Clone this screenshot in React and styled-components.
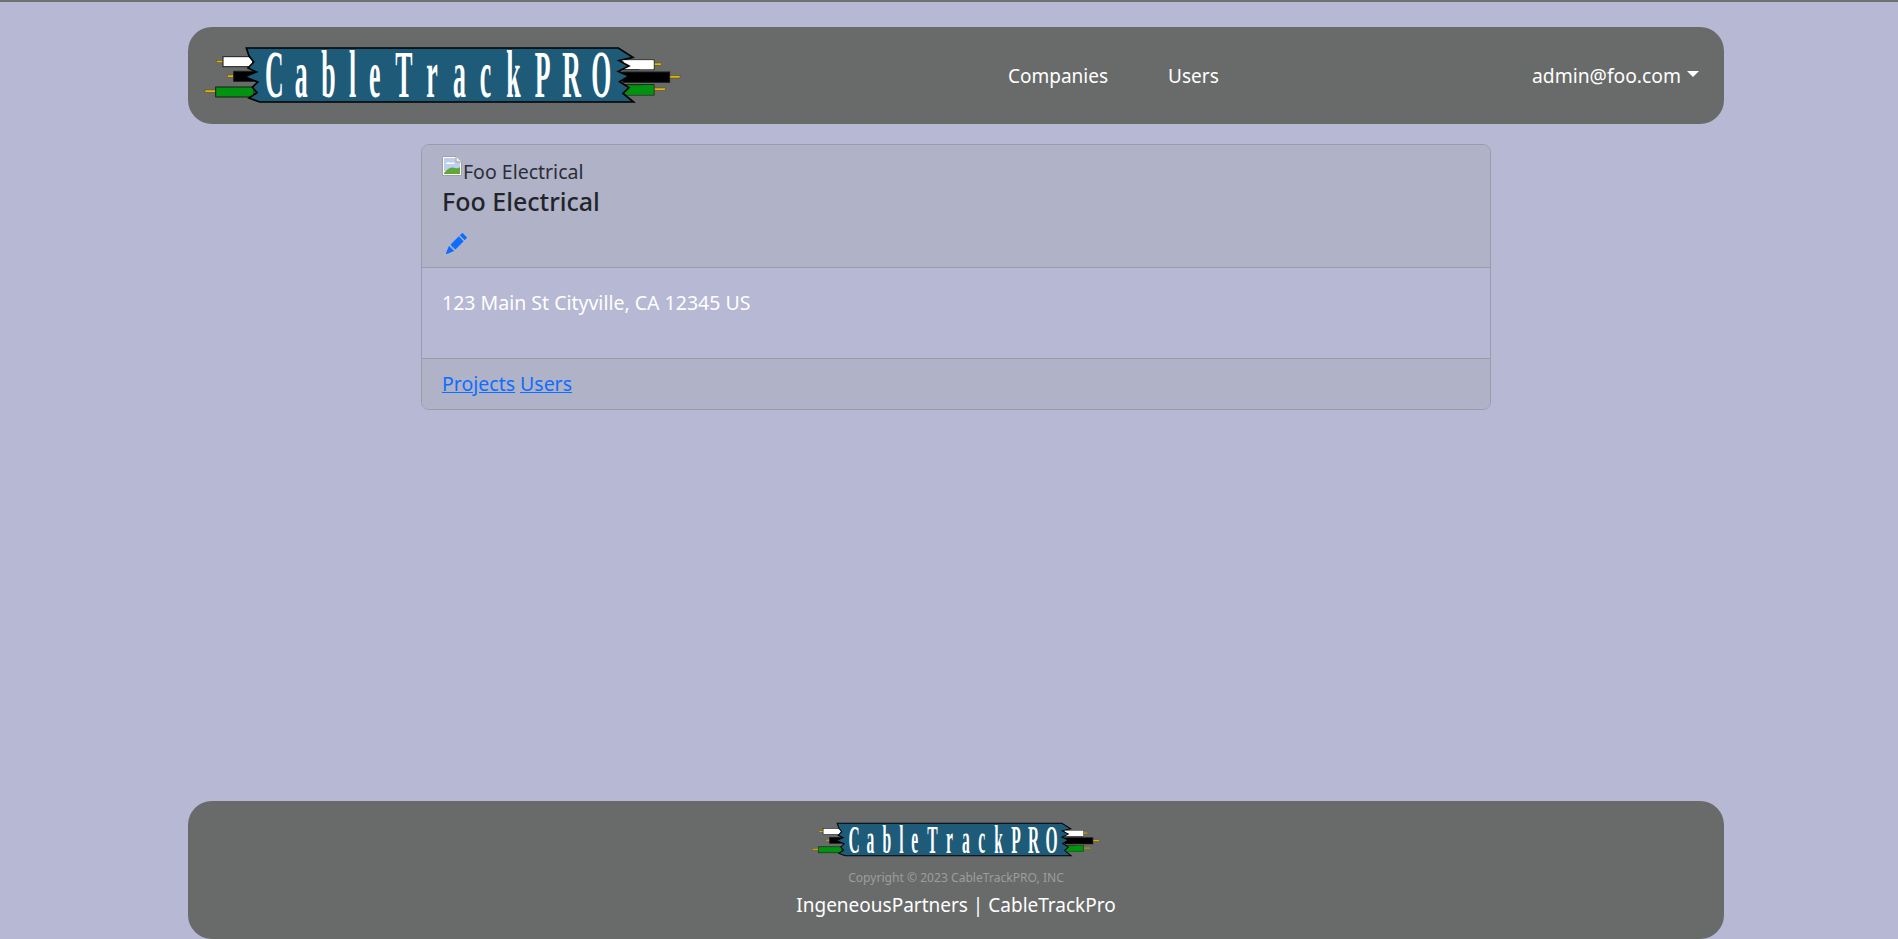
import React from "react";
import styled, { createGlobalStyle } from "styled-components";
import { BsPencilFill } from "react-icons/bs";

const FONT = `"Noto Sans", "Open Sans", "Liberation Sans", sans-serif`;

const Global = createGlobalStyle`
  html, body { margin: 0; padding: 0; height: 100%; overflow: hidden; }
  body { background: #b6b8d4; font-family: ${FONT}; color: #212529; font-size: 19px; }
  #root { height: 100%; }
`;

const Page = styled.div`
  height: 939px;
  box-sizing: border-box;
  border-top: 2px solid #6f7070;
  padding: 25px 174px 0 188px;
  display: flex;
  flex-direction: column;
`;

const Header = styled.header`
  height: 97px;
  flex: none;
  background: #696b6a;
  border-radius: 24px;
  display: flex;
  align-items: center;
  padding: 0 25px 0 15px;
`;

const Brand = styled.div`
  flex: none;
  width: 480px;
`;

const Nav = styled.nav`
  display: flex;
  gap: 60px;
  margin-left: 325px;
`;

const NavLink = styled.a`
  color: #fff;
  font-size: 19px;
  line-height: 28px;
`;

const Account = styled.div`
  margin-left: auto;
  display: flex;
  align-items: center;
  gap: 6px;
  color: #fff;
  font-size: 19.3px;
  line-height: 28px;
`;

const Caret = styled.span`
  width: 0;
  height: 0;
  border-top: 6px solid #fff;
  border-left: 6px solid transparent;
  border-right: 6px solid transparent;
  margin-top: -3px;
`;

const Card = styled.section`
  width: 1070px;
  box-sizing: border-box;
  margin: 20px auto 0;
  flex: none;
  border: 1px solid #9a9bad;
  border-radius: 8px;
  overflow: hidden;
`;

const CardHeader = styled.div`
  height: 123px;
  box-sizing: border-box;
  padding: 9px 20px 0;
  background: #b0b2c8;
  border-bottom: 1px solid #9a9bad;
`;

const AltLine = styled.div`
  display: flex;
  align-items: flex-end;
  height: 30px;
  line-height: 24px;
  font-size: 19.5px;
  color: #2b2e38;
  margin-bottom: 1px;
`;

const Title = styled.h5`
  margin: 0;
  font-size: 25px;
  line-height: 33px;
  font-weight: 500;
  color: #212529;
`;

const EditLink = styled.a`
  display: flex;
  color: #0d6efd;
  padding: 15px 0 0 4px;
  font-size: 21px;
`;

const CardBody = styled.div`
  height: 90px;
  box-sizing: border-box;
  padding: 21px 20px 0;
  color: #fff;
  font-size: 19.5px;
  line-height: 28px;
`;

const CardFooter = styled.div`
  height: 51px;
  box-sizing: border-box;
  padding: 11px 20px 0;
  background: #b0b2c8;
  border-top: 1px solid #9a9bad;
  display: flex;
  gap: 5px;
  line-height: 28px;
`;

const FooterLink = styled.a`
  color: #0d6efd;
  text-decoration: underline;
  font-size: 19.5px;
`;

const Footer = styled.footer`
  margin-top: auto;
  height: 138px;
  flex: none;
  box-sizing: border-box;
  background: #696b6a;
  border-radius: 24px;
  padding-top: 21px;
  display: flex;
  flex-direction: column;
  align-items: center;
`;

const Copyright = styled.div`
  margin-top: 12px;
  font-size: 12.1px;
  line-height: 18px;
  color: #9c9d9c;
`;

const FooterLine = styled.div`
  margin-top: 4px;
  font-size: 19px;
  line-height: 28px;
  color: #fff;
`;

const LogoSvg = styled.svg`
  display: block;
  overflow: visible;
`;

const LogoText = styled.text`
  font-family: "Liberation Serif", serif;
  font-weight: 700;
  font-size: 204px;
  fill: #fff;
`;

const SCALE = 0.38;
const LETTER_X = [226, 315, 395, 478, 538, 617, 710, 790, 870, 950, 1035, 1118, 1205];

function Wire({ x, y, w, h, fill, pinX, pinW, pinY }) {
  return (
    <g>
      <rect x={pinX} y={pinY} width={pinW} height="7" fill="#e6b400" stroke="#4a4a30" strokeWidth="1.5" />
      <rect x={x} y={y} width={w} height={h} fill={fill} stroke="#1c1c1c" strokeWidth="3" />
    </g>
  );
}

function Logo({ width }) {
  return (
    <LogoSvg width={width} viewBox="40 80 1440 175" role="img" aria-label="CableTrackPRO">
      <Wire x={100} y={112} w={90} h={30} fill="#fff" pinX={80} pinW={20} pinY={123} />
      <Wire x={132} y={156} w={60} h={30} fill="#000" pinX={113} pinW={19} pinY={167} />
      <Wire x={78} y={203} w={115} h={30} fill="#00930f" pinX={46} pinW={32} pinY={212} />
      <Wire x={1300} y={122} w={93} h={29} fill="#fff" pinX={1393} pinW={22} pinY={131} />
      <Wire x={1300} y={158} w={140} h={31} fill="#000" pinX={1440} pinW={31} pinY={169} />
      <Wire x={1300} y={196} w={93} h={31} fill="#00930f" pinX={1393} pinW={34} pinY={206} />
      <path
        d="M170 86 H1286 L1330 114 L1288 124 L1318 140 L1286 156 L1318 170 L1290 187 L1318 205 L1300 222 L1332 248 H210 L178 236 L202 220 L188 204 L204 188 L165 172 L200 158 L175 146 L192 128 L178 110 Z"
        fill="#1d5b79"
        stroke="#000"
        strokeWidth="5"
      />
      <path d="M1296 123 L1392 123 V150 H1350 Z" fill="#fff" />
      <path d="M1306 226 L1358 197 H1392 V226 Z" fill="#00930f" />
      <g transform={`scale(${SCALE} 1)`}>
        <LogoText x={LETTER_X.map((x) => x / SCALE).join(" ")} y="234">
          CableTrackPRO
        </LogoText>
      </g>
    </LogoSvg>
  );
}

function BrokenImage() {
  return (
    <svg width="20" height="20" viewBox="0 0 20 20" style={{ display: "block", flex: "none", marginBottom: 8, marginRight: 1 }}>
      <path d="M0.5 0.5 H14 L19.5 6 V19.5 H0.5 Z" fill="#fff" stroke="#a0a0a0" />
      <path d="M2 2 H13 L18 7 V13 L2 15 Z" fill="#bcd0ee" />
      <path d="M3 8 Q6 5 9 7 Q11 5 13 8 Z" fill="#fff" />
      <path d="M2 18 V17 Q8 10 13 12 Q16 13 18 11 V18 Z" fill="#5fa63c" />
      <path d="M14 0.5 V6 H19.5" fill="#eee" stroke="#a0a0a0" />
    </svg>
  );
}

export default function App() {
  return (
    <>
      <Global />
      <Page>
        <Header>
          <Brand>
            <Logo width={480} />
          </Brand>
          <Nav>
            <NavLink>Companies</NavLink>
            <NavLink>Users</NavLink>
          </Nav>
          <Account>
            admin@foo.com
            <Caret />
          </Account>
        </Header>
        <Card>
          <CardHeader>
            <AltLine>
              <BrokenImage />
              Foo Electrical
            </AltLine>
            <Title>Foo Electrical</Title>
            <EditLink>
              <BsPencilFill />
            </EditLink>
          </CardHeader>
          <CardBody>123 Main St Cityville, CA 12345 US</CardBody>
          <CardFooter>
            <FooterLink>Projects</FooterLink>
            <FooterLink>Users</FooterLink>
          </CardFooter>
        </Card>
        <Footer>
          <Logo width={290} />
          <Copyright>Copyright © 2023 CableTrackPRO, INC</Copyright>
          <FooterLine>IngeneousPartners | CableTrackPro</FooterLine>
        </Footer>
      </Page>
    </>
  );
}
